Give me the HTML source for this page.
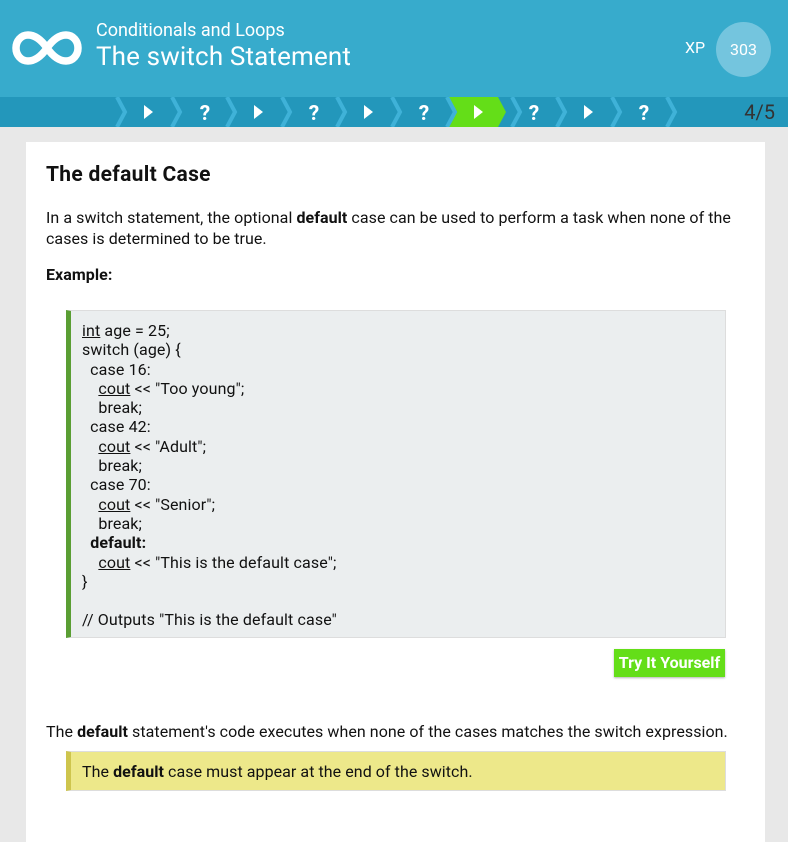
<!DOCTYPE html>
<html><head><meta charset="utf-8"><style>
body{margin:0;width:788px;height:801px;overflow:hidden;background:#e8e8e8;font-family:"Roboto","Liberation Sans",sans-serif;color:#111;}
.hdr{position:absolute;left:0;top:0;width:788px;height:97px;background:#37abcc;}
.sub{position:absolute;left:96px;top:20px;font-size:18px;color:#fff;}
.ttl{position:absolute;left:96px;top:42px;font-size:26px;color:#fff;letter-spacing:0.15px}
.xp{position:absolute;left:685px;top:38px;color:#fff;font-size:16px}
.circ{position:absolute;left:716px;top:22px;width:55px;height:55px;border-radius:50%;background:#74c5de;color:#fff;font-size:16px;text-align:center;line-height:55px}
.card{position:absolute;left:26px;top:142px;width:739px;height:700px;background:#fff;}
.t{position:absolute;font-size:16px;line-height:21px;letter-spacing:0.06px}
pre{margin:0;font-family:inherit}
.code{position:absolute;left:40px;top:168px;width:654px;height:326px;background:#ebeeef;border:1px solid #ddd;border-left:5px solid #5a9e33;}
.code pre{position:absolute;left:11px;top:10px;font-size:16px;line-height:19.3px;color:#111;letter-spacing:0.12px}
u{text-decoration:underline}
.btn{position:absolute;left:588px;top:507px;width:111px;height:28px;background:#64de18;color:#fff;font-weight:bold;font-size:16px;line-height:28px;text-align:center;box-shadow:0 1px 2px rgba(0,0,0,.3)}
.note{position:absolute;left:40px;top:609px;width:654px;height:38px;background:#ede88a;border:1px solid #ddd;border-left:5px solid #cec54d;}
</style></head><body>
<div class="hdr">
<svg style="position:absolute;left:12px;top:28px" width="70" height="40" viewBox="0 0 70 40"><path d="M35 20 C28 10 22 7 16 7 C9 7 4 13 4 20 C4 27 9 33 16 33 C22 33 28 30 35 20 C42 10 48 7 54 7 C61 7 66 13 66 20 C66 27 61 33 54 33 C48 33 42 30 35 20Z" fill="none" stroke="#fff" stroke-width="7.5"/></svg>
<div class="sub">Conditionals and Loops</div>
<div class="ttl">The switch Statement</div>
<div class="xp">XP</div>
<div class="circ">303</div>
</div>
<svg style="position:absolute;left:0;top:97px" width="788" height="30">
<rect width="788" height="30" fill="#2397bb"/>
<polygon points="449,0 498,0 506,15 498,30 449,30 457,15" fill="#64de18"/>
<g fill="none" stroke="#3fb2d8" stroke-width="4">
<polyline points="117,0 125,15 117,30"/><polyline points="172,0 180,15 172,30"/><polyline points="227,0 235,15 227,30"/><polyline points="282,0 290,15 282,30"/><polyline points="337,0 345,15 337,30"/><polyline points="392,0 400,15 392,30"/><polyline points="447,0 455,15 447,30"/><polyline points="557,0 565,15 557,30"/><polyline points="612,0 620,15 612,30"/><polyline points="667,0 675,15 667,30"/><polyline points="512,0 520,15 512,30"/>
</g>
<g fill="#fff"><polygon points="144,8 144,22 153,15"/><polygon points="254,8 254,22 263,15"/><polygon points="364,8 364,22 373,15"/><polygon points="474,8 474,22 483,15"/><polygon points="584,8 584,22 593,15"/></g>
<g fill="#fff" font-family="Roboto,Liberation Sans,sans-serif" font-weight="bold" font-size="21" text-anchor="middle"><text x="205" y="23">?</text><text x="314" y="23">?</text><text x="424" y="23">?</text><text x="534" y="23">?</text><text x="644" y="23">?</text></g>
<text x="775" y="22" fill="#333" font-family="Roboto,Liberation Sans,sans-serif" font-size="20" text-anchor="end">4/5</text>
</svg>
<div class="card">
<div class="t" style="left:20px;top:23px;font-size:21px;font-weight:bold;letter-spacing:0.3px">The default Case</div>
<div class="t" style="left:20px;top:65px">In a switch statement, the optional <b>default</b> case can be used to perform a task when none of the<br>cases is determined to be true.</div>
<div class="t" style="left:20px;top:122px;font-weight:bold">Example:</div>
<div class="code"><pre><u>int</u> age = 25;
switch (age) {
  case 16:
    <u>cout</u> &lt;&lt; "Too young";
    break;
  case 42:
    <u>cout</u> &lt;&lt; "Adult";
    break;
  case 70:
    <u>cout</u> &lt;&lt; "Senior";
    break;
  <b>default:</b>
    <u>cout</u> &lt;&lt; "This is the default case";
}

// Outputs "This is the default case"</pre></div>
<div class="btn">Try It Yourself</div>
<div class="t" style="left:20px;top:579px">The <b>default</b> statement's code executes when none of the cases matches the switch expression.</div>
<div class="note"><div class="t" style="left:11px;top:9px">The <b>default</b> case must appear at the end of the switch.</div></div>
</div>
</body></html>
